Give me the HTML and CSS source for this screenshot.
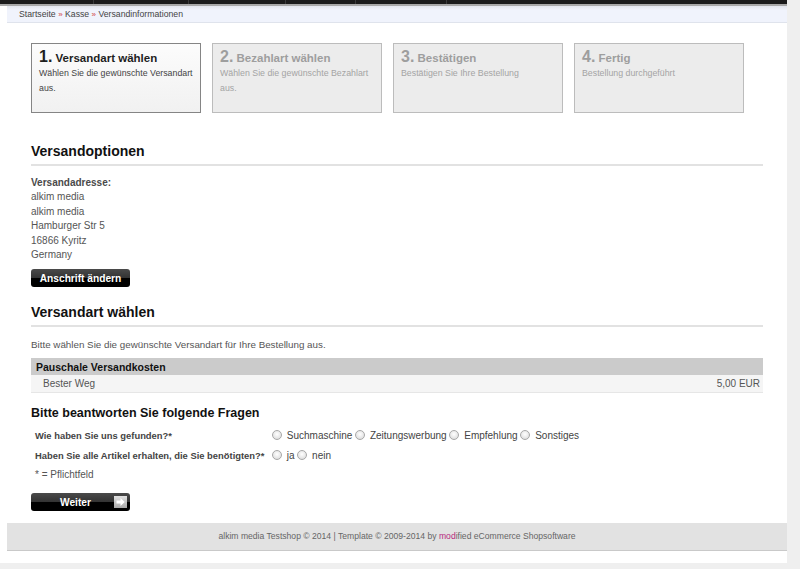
FILE: index.html
```html
<!DOCTYPE html>
<html lang="de">
<head>
  <meta charset="UTF-8" />
  <title>Versandinformationen</title>
  <link rel="stylesheet" href="styles.css">
</head>
<body>
  <div id="wrap">
    <div id="topnav">
      <span class="nav-item w94"></span>
      <span class="nav-item w95"></span>
      <span class="nav-item w97"></span>
      <span class="nav-item w70"></span>
      <span class="nav-item w91"></span>
    </div>
    <div id="breadcrumb">
      <a href="#">Startseite</a> <span class="sep">»</span> <a href="#">Kasse</a> <span class="sep">»</span> <a href="#">Versandinformationen</a>
    </div>

    <div id="content">
      <div id="steps">
        <div class="step active">
          <div class="step-title"><span class="num">1.</span> Versandart wählen</div>
          <div class="step-desc">Wählen Sie die gewünschte Versandart aus.</div>
        </div>
        <div class="step">
          <div class="step-title"><span class="num">2.</span> Bezahlart wählen</div>
          <div class="step-desc">Wählen Sie die gewünschte Bezahlart aus.</div>
        </div>
        <div class="step">
          <div class="step-title"><span class="num">3.</span> Bestätigen</div>
          <div class="step-desc">Bestätigen Sie Ihre Bestellung</div>
        </div>
        <div class="step">
          <div class="step-title"><span class="num">4.</span> Fertig</div>
          <div class="step-desc">Bestellung durchgeführt</div>
        </div>
      </div>

      <h2 class="first">Versandoptionen</h2>
      <div class="address">
        <strong>Versandadresse:</strong><br>
        alkim media<br>
        alkim media<br>
        Hamburger Str 5<br>
        16866 Kyritz<br>
        Germany
      </div>
      <a class="btn" href="#"><span class="btn-label">Anschrift ändern</span></a>

      <h2>Versandart wählen</h2>
      <p class="intro">Bitte wählen Sie die gewünschte Versandart für Ihre Bestellung aus.</p>
      <table class="shipping">
        <tr><th colspan="2">Pauschale Versandkosten</th></tr>
        <tr><td>Bester Weg</td><td class="price">5,00 EUR</td></tr>
      </table>

      <h3>Bitte beantworten Sie folgende Fragen</h3>
      <div class="questions">
        <div class="q-label">Wie haben Sie uns gefunden?*</div>
        <div class="q-opts">
          <input type="radio" name="q1"> Suchmaschine
          <input type="radio" name="q1"> Zeitungswerbung
          <input type="radio" name="q1"> Empfehlung
          <input type="radio" name="q1"> Sonstiges
        </div>
        <div class="q-label">Haben Sie alle Artikel erhalten, die Sie benötigten?*</div>
        <div class="q-opts">
          <input type="radio" name="q2"> ja
          <input type="radio" name="q2"> nein
        </div>
      </div>
      <div class="required">* = Pflichtfeld</div>

      <a class="btn btn-next" href="#">
        <span class="btn-label">Weiter</span>
        <svg class="arrow" width="13" height="12" viewBox="0 0 13 12">
          <defs>
            <linearGradient id="ag" x1="0" y1="0" x2="0" y2="1">
              <stop offset="0" stop-color="#e2e2e2"/>
              <stop offset="1" stop-color="#a9a9a9"/>
            </linearGradient>
          </defs>
          <rect x="0" y="0" width="13" height="12" fill="url(#ag)"/>
          <path d="M2.5 4.5h4v-2.5l4.2 4-4.2 4v-2.5h-4z" fill="#fff"/>
        </svg>
      </a>
    </div>

    <div id="footer">
      alkim media Testshop © 2014 | Template © 2009-2014 by <span class="mod">mod</span>ified eCommerce Shopsoftware
    </div>
  </div>
</body>
</html>
```

FILE: styles.css
```css
body {
  margin: 0;
  background: #efefef;
  font-family: "Liberation Sans", Arial, sans-serif;
  font-size: 10px;
  color: #555;
}
#wrap {
  width: 787px;
  background: #fff;
  padding-bottom: 12px;
}
#topnav {
  display: flex;
  height: 4px;
  background: #1b1b1b;
  border-bottom: 2px solid #a8a8a8;
}
.nav-item {
  border-right: 1px solid #3a3a3a;
}
.w94 { width: 93px; }
.w95 { width: 94px; }
.w97 { width: 96px; }
.w70 { width: 69px; }
.w91 { width: 90px; }
#breadcrumb {
  margin-left: 7px;
  height: 16px;
  line-height: 17px;
  padding-left: 12px;
  background: linear-gradient(#e3e6ee, #f0f3fc 4px);
  border-bottom: 1px solid #dfe3ec;
  font-size: 8.7px;
  color: #444;
}
#breadcrumb a {
  color: #444;
  text-decoration: none;
}
#breadcrumb .sep {
  color: #d04343;
  font-size: 8px;
}
#content {
  padding: 20px 24px 0 31px;
}
#steps {
  display: flex;
  gap: 11px;
}
.step {
  width: 170px;
  height: 70px;
  box-sizing: border-box;
  border: 1px solid #bcbcbc;
  background: #ececec;
  padding: 5px 7px;
  color: #a4a4a4;
}
.step.active {
  border-color: #858585;
  background: linear-gradient(#fcfcfc, #f1f1f1);
  color: #444;
}
.step-title {
  font-size: 11.5px;
  font-weight: bold;
  line-height: 16px;
  color: #9e9e9e;
}
.step.active .step-title {
  color: #1e1e1e;
}
.step-title .num {
  font-size: 16px;
  line-height: 16px;
}
.step-desc {
  font-size: 8.8px;
  line-height: 15px;
}
h2 {
  margin: 16px 0 10px;
  font-size: 14px;
  line-height: 18px;
  padding-bottom: 4px;
  border-bottom: 2px solid #e2e2e2;
  color: #111;
}
h2.first {
  margin-top: 29px;
}
.address {
  line-height: 14.4px;
  color: #555;
}
.address strong {
  color: #4a4a4a;
}
.btn {
  display: flex;
  align-items: center;
  width: 99px;
  height: 18px;
  margin-top: 7px;
  border-radius: 3px;
  background: linear-gradient(#4a4a4a, #333 50%, #000 50%, #000);
  color: #fff;
  font-weight: bold;
  font-size: 10.2px;
  text-decoration: none;
}
.btn-label {
  flex: 1;
  text-align: center;
}
.btn-next {
  margin-top: 9px;
  padding-right: 3px;
  box-sizing: border-box;
}
.btn-next .btn-label {
  padding-left: 6px;
}
.intro {
  margin: 11px 0 6px;
  line-height: 14px;
  font-size: 9.8px;
}
.shipping {
  width: 100%;
  border-collapse: collapse;
}
.shipping th {
  height: 17px;
  padding: 0 5px;
  background: #cbcbcb;
  text-align: left;
  font-size: 10.5px;
  color: #111;
}
.shipping td {
  height: 17px;
  padding: 0 0 0 12px;
  background: #f5f5f5;
  border-bottom: 1px solid #e6e6e6;
  color: #555;
}
.shipping td.price {
  text-align: right;
  padding: 0 3px 0 0;
}
h3 {
  margin: 12px 0 5px;
  font-size: 12.5px;
  line-height: 16px;
  color: #111;
}
.questions {
  display: grid;
  grid-template-columns: 241px auto;
  line-height: 19.5px;
}
.q-label {
  padding-left: 4px;
  font-weight: bold;
  font-size: 9.4px;
  color: #444;
}
.q-opts {
  color: #444;
}
.q-opts input {
  appearance: none;
  width: 10px;
  height: 10px;
  margin: 0 2px 0 0;
  border: 1px solid #a8a8a8;
  border-radius: 50%;
  background: radial-gradient(circle at 50% 40%, #fff, #d6d6d6);
  vertical-align: -1px;
}
.required {
  padding-left: 4px;
  line-height: 19px;
}
.arrow {
  display: block;
}
#footer {
  margin: 12px 0 0 7px;
  height: 27px;
  line-height: 27px;
  background: #e2e2e2;
  border-bottom: 1px solid #c9c9c9;
  text-align: center;
  font-size: 8.6px;
  color: #666;
}
#footer .mod {
  color: #b52a80;
}
```
